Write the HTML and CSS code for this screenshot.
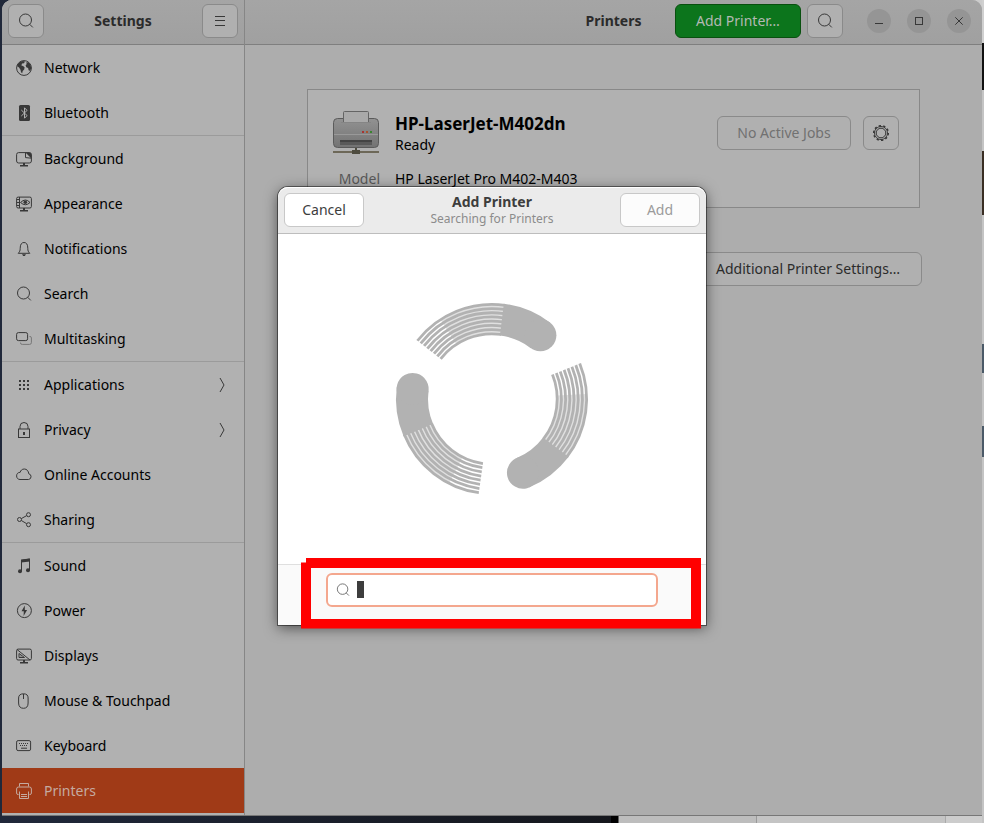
FILE: index.html
```html
<!DOCTYPE html>
<html lang="en">
<head>
<meta charset="utf-8">
<title>Settings</title>
<link rel="stylesheet" href="styles.css">
</head>
<body>
<svg class="defs" aria-hidden="true">
  <symbol id="search" viewBox="0 0 16 16"><circle cx="7.5" cy="7" r="6"/><path d="M11.600 11.200l3.200 3.200"/></symbol>
</svg>
<div class="window">
  <aside class="sidebar">
    <header class="bar">
      <button class="btn square" aria-label="Search settings"><svg class="icon"><use href="#search"/></svg></button>
      <h1 class="title">Settings</h1>
      <button class="btn square" aria-label="Menu"><svg class="icon crisp" viewBox="0 0 16 16"><path d="M3 3.500h10M3 7.500h10M3 12.500h10"/></svg></button>
    </header>
    <nav class="nav">
      <a href="#"><svg class="icon" viewBox="0 0 16 16"><circle cx="8" cy="8" r="7.400"/><path class="fill" d="M1 6C2 3 4 1.200 7 1l2 .6-1 1.600-2 .4-.6 1.800 1.600.7 1.600 1.200-.4 2.200-1.500 1.400-.5 2.400-1.200-1-.5-2.600L3 7.500zM10 2.600l2.400-.4 2 2.300.8 3.500-1 3-1.600-.7-.5-2.300-1.800-.8-.7-2 1.200-1.200z"/></svg>Network</a>
      <a href="#"><svg class="icon" viewBox="0 0 16 16"><rect class="fill" x="3" y="0" width="11" height="16" rx="1.500"/><path class="cut" d="M5.300 5l5.800 5.600-2.600 2.600V2.800l2.600 2.600L5.300 11"/></svg>Bluetooth</a>
      <a class="group" href="#"><svg class="icon" viewBox="0 0 16 16"><rect x=".6" y="1.600" width="14.800" height="10.400" rx="2"/><path class="fill" d="M9.500 1.500H14l1.400 1.500v4.500zM7 12h2v2h3v1.500H4V14h3z"/><path d="M9.500 1.600v5l5.800.6"/></svg>Background</a>
      <a href="#"><svg class="icon" viewBox="0 0 16 16"><rect x=".6" y="1.100" width="14.800" height="10.900" rx="1.500"/><path d="M3.500 1v11M1 3.500h2M1 6.500h2M1 9.500h2M4.500 6.500Q9.500 1.500 14 6.500 9.500 11 4.500 6.500z"/><circle class="fill" cx="9.300" cy="6.300" r="1.800"/><path class="fill" d="M7 12h2v2h3v1.500H4V14h3z"/></svg>Appearance</a>
      <a href="#"><svg class="icon" viewBox="0 0 16 16"><path d="M2.200 12.300h11.600c-1.500-1.500-2-2.500-2-5C11.800 3.500 10.500 1.500 8 1.500S4.200 3.500 4.200 7.300c0 2.500-.5 3.500-2 5z"/><path class="fill" d="M6 13.300h4L8.800 15H7.200z"/></svg>Notifications</a>
      <a href="#"><svg class="icon"><use href="#search"/></svg>Search</a>
      <a href="#"><svg class="icon" viewBox="0 0 16 16"><rect x=".6" y="1.600" width="11" height="8" rx="1.800"/><path class="soft" d="M13.500 5.500h.5q1.400 0 1.400 1.400v4.700q0 1.800-1.800 1.800H6.300q-1.800 0-1.800-1.400v-.4"/></svg>Multitasking</a>
      <a class="group" href="#"><svg class="icon" viewBox="0 0 16 16"><path class="fill" d="M3 3h2v2H3zM7 3h2v2H7zM11 3h2v2h-2zM3 7h2v2H3zM7 7h2v2H7zM11 7h2v2h-2zM3 11h2v2H3zM7 11h2v2H7zM11 11h2v2h-2z"/></svg>Applications<svg class="icon next" viewBox="0 0 16 16"><path d="M6 1l4 7-4 7"/></svg></a>
      <a href="#"><svg class="icon" viewBox="0 0 16 16"><rect x="2.500" y="7" width="11" height="8.500"/><path d="M4 7V4.500a4 4 0 0 1 8 0V7"/><path class="fill" d="M7 10h2v3H7z"/></svg>Privacy<svg class="icon next" viewBox="0 0 16 16"><path d="M6 1l4 7-4 7"/></svg></a>
      <a href="#"><svg class="icon" viewBox="0 0 16 16"><path d="M4 12.500h8.500a2.900 2.900 0 0 0 .3-5.700C12.500 4 10.800 2 8.300 2 6 2 4.600 3.500 4.200 5.300 2 5.300.6 6.800.6 8.900.6 11 2 12.500 4 12.500z"/></svg>Online Accounts</a>
      <a href="#"><svg class="icon" viewBox="0 0 16 16"><circle cx="3.500" cy="7.500" r="2"/><circle cx="12.500" cy="2.700" r="2"/><circle cx="12.500" cy="12.700" r="2"/><path d="M5.300 6.600l5.400-3M5.300 8.500l5.400 3.200"/></svg>Sharing</a>
      <a class="group" href="#"><svg class="icon" viewBox="0 0 16 16"><path d="M5.500 13V2.500L13.500 1v11"/><path class="fill" d="M5 1.500L14 .5v3L5 4.500z"/><circle class="fill" cx="4" cy="13.300" r="2"/><circle class="fill" cx="12" cy="12.300" r="2"/></svg>Sound</a>
      <a href="#"><svg class="icon" viewBox="0 0 16 16"><circle cx="8.400" cy="7.600" r="7"/><path class="fill" d="M8.800 2.500L5.500 8.300h2.300l-.2 4.700 3.500-6H8.800z"/></svg>Power</a>
      <a href="#"><svg class="icon" viewBox="0 0 16 16"><rect x=".6" y="1.100" width="14.800" height="10.900" rx="1.500"/><path d="M1 1.500L14 12M3 5.500v4h5.500zM4.500 8h1"/><path class="fill" d="M7 12h2v2h3v1.500H4V14h3z"/></svg>Displays</a>
      <a href="#"><svg class="icon" viewBox="0 0 16 16"><path d="M7.500.8c3.200 0 4.600 1.500 4.600 4.200v5c0 3.500-1.500 5.300-4.600 5.300S2.600 13.500 2.600 10V5C2.600 2.300 4.300.8 7.500.8zM7.500 1v5"/></svg>Mouse &amp; Touchpad</a>
      <a href="#"><svg class="icon" viewBox="0 0 16 16"><rect x=".6" y="2.600" width="14" height="10" rx="1.500"/><path class="keys" d="M3 5.500h10M4 7.500h8"/><path d="M5 10.200h6"/></svg>Keyboard</a>
      <a class="active" href="#" aria-current="page"><svg class="icon" viewBox="0 0 16 16"><path d="M3.500 3.500v-3h9v3M2.500 11.500H2Q.6 11.500.6 10V6Q.6 4 2.500 4h11q1.900 0 1.900 2v4q0 1.500-1.400 1.500h-.5M3.500 8.500v7h9v-7M5 11.500h6M5 13.500h6"/></svg>Printers</a>
    </nav>
  </aside>
  <main class="main">
    <header class="bar split">
      <h2 class="title">Printers</h2>
      <div class="tools">
        <button class="btn suggested">Add Printer…</button>
        <button class="btn square" aria-label="Search printers"><svg class="icon"><use href="#search"/></svg></button>
        <div class="controls">
          <button aria-label="Minimize"><svg class="icon crisp" viewBox="0 0 16 16"><path d="M4 10.500h8"/></svg></button>
          <button aria-label="Maximize"><svg class="icon crisp" viewBox="0 0 16 16"><path d="M4.500 4.500h7v7h-7z"/></svg></button>
          <button aria-label="Close"><svg class="icon" viewBox="0 0 16 16"><path d="M4.300 4.300l7.400 7.400M11.700 4.300l-7.400 7.400"/></svg></button>
        </div>
      </div>
    </header>
    <section class="page">
      <article class="card">
        <svg class="printer" viewBox="0 0 48 45">
          <defs><linearGradient id="shell" x2="0" y2="1"><stop stop-color="#929292"/><stop offset="1" stop-color="#737373"/></linearGradient></defs>
          <path fill="#6d6858" d="M1 41h46v2H1z"/><path fill="#4f4d40" d="M20 40h8v4h-8zM23 37h2v3h-2z"/>
          <rect x="1.500" y="8.500" width="45" height="29" rx="4" fill="url(#shell)" stroke="#5b5b5b"/>
          <path stroke="#999" d="M2 24.500h44"/>
          <path fill="#a9a9a9" stroke="#646464" d="M11.500 12V2.500q0-1 1-1h23q1 0 1 1V12"/><path fill="#858585" d="M9 12h30v1H9z"/>
          <path fill="#444" d="M8 30h32v2H8z"/><path fill="#5a5a5a" d="M8 32h32v3H8z"/>
          <path fill="#a83232" d="M30 21h2v2h-2z"/><path fill="#a8542c" d="M34 21h2v2h-2z"/><path fill="#39842f" d="M38 21h2v2h-2z"/>
        </svg>
        <div class="identity"><h3>HP-LaserJet-M402dn</h3><p>Ready</p></div>
        <div class="actions">
          <button class="btn" disabled>No Active Jobs</button>
          <button class="btn square" aria-label="Printer options"><svg class="icon" viewBox="0 0 16 16"><circle cx="8" cy="8" r="6.500"/><circle cx="8" cy="8" r="4.800"/><circle class="teeth" cx="8" cy="8" r="7.300" pathLength="60"/></svg></button>
        </div>
        <span class="label">Model</span><span class="model">HP LaserJet Pro M402-M403</span>
      </article>
      <button class="btn more">Additional Printer Settings…</button>
    </section>
  </main>
  <div class="overlay">
    <section class="dialog" role="dialog" aria-labelledby="dialog-title">
      <header class="dialog-bar">
        <button class="btn">Cancel</button>
        <div class="heading"><h2 id="dialog-title">Add Printer</h2><p>Searching for Printers</p></div>
        <button class="btn" disabled>Add</button>
      </header>
      <div class="searching">
        <svg class="spinner" viewBox="0 0 192 192" role="img" aria-label="Searching">
          <defs><g id="arm">
            <g stroke-width="2.800" stroke-dasharray="60 300">
              <circle cx="96" cy="96" r="65.200" pathLength="360" transform="rotate(218 96 96)"/><circle cx="96" cy="96" r="69.400" pathLength="360" transform="rotate(218 96 96)"/><circle cx="96" cy="96" r="73.600" pathLength="360" transform="rotate(218 96 96)"/><circle cx="96" cy="96" r="77.800" pathLength="360" transform="rotate(218 96 96)"/><circle cx="96" cy="96" r="82" pathLength="360" transform="rotate(218 96 96)"/><circle cx="96" cy="96" r="86.200" pathLength="360" transform="rotate(218 96 96)"/><circle cx="96" cy="96" r="90.400" pathLength="360" transform="rotate(218 96 96)"/><circle cx="96" cy="96" r="94.600" pathLength="360" transform="rotate(218 96 96)"/>
            </g>
            <circle class="haze" cx="96" cy="96" r="80" stroke-width="30" pathLength="360" stroke-dasharray="40 320" transform="rotate(237 96 96)"/>
            <circle cx="96" cy="96" r="80" stroke-width="32" pathLength="360" stroke-dasharray="30.400 329.600" transform="rotate(277 96 96)"/>
            <circle class="cap" cx="144.400" cy="32.300" r="16"/>
          </g></defs>
          <use href="#arm"/><use href="#arm" transform="rotate(120 96 96)"/><use href="#arm" transform="rotate(240 96 96)"/>
        </svg>
      </div>
      <footer class="dialog-foot">
        <label class="field"><svg class="icon"><use href="#search"/></svg><span class="caret"></span><input type="text" aria-label="Search for a printer"></label>
      </footer>
      <div class="highlight"></div>
    </section>
  </div>
</div>
</body>
</html>
```

FILE: styles.css
```css
* { box-sizing: border-box; }
body {
  margin: 0;
  min-height: 100vh;
  display: flex;
  padding: 0 2px 8px;
  font: 14px/18px "Noto Sans", sans-serif;
  color: #000;
  background:
    linear-gradient(#d0d0d0 43px, #111 43px 90px, #c4c4c4 90px 151px, #3a2e24 151px 215px, #c4c4c4 215px 344px, #4b5a68 344px 373px, #c4c4c4 373px 426px, #4b5a68 426px 457px, #c4c4c4 457px) right / 2px 100% no-repeat,
    linear-gradient(90deg, #20283a, #15171d 611px, #000 611px 618px, #bdbdbd 619px 756px, #999 756px 757px, #c4c4c4 757px 945px, #aaa 945px 946px, #ccc 946px);
}
h1, h2, h3, p { margin: 0; font-size: inherit; }
a { color: inherit; text-decoration: none; }
.defs { position: absolute; width: 0; height: 0; }
.window {
  position: relative;
  flex: 1;
  display: flex;
  border-radius: 10px 10px 0 0;
  overflow: hidden;
  background: #adadad;
  box-shadow: 0 1px 0 #777;
}
.icon { width: 16px; height: 16px; flex: none; fill: none; stroke: #383838; stroke-width: 1; overflow: visible; }
.icon .fill { fill: #383838; stroke: none; }
.icon .cut { stroke: #b1b1b1; stroke-width: 1; }
.icon .soft { stroke: #777; }
.icon .keys { stroke-dasharray: 1 1; }
.icon .teeth { stroke-dasharray: 3 3; stroke-width: 1.5; }
.crisp { shape-rendering: crispEdges; }

.bar {
  display: flex;
  align-items: center;
  justify-content: space-between;
  height: 45px;
  padding: 0 6px 3px;
  background: linear-gradient(#a5a5a5, #a0a0a0);
  border-bottom: 1px solid #7f7f7f;
}
.title { font-weight: 700; color: #2b2b2b; }
.btn {
  height: 34px;
  padding: 0 16px;
  border: 1px solid #8a8a8a;
  border-radius: 6px;
  background: #b0b0b0;
  font: inherit;
  color: #2b2b2b;
  white-space: nowrap;
}
.btn:disabled { color: #717171; }
.square { display: flex; align-items: center; justify-content: center; width: 36px; padding: 0; }
.suggested { width: 126px; padding: 0; background: #0c751c; border-color: #09500f; color: #b3b9b3; }

.sidebar { width: 243px; flex: none; background: #b1b1b1; border-right: 1px solid #868686; }
.nav a { display: flex; align-items: center; gap: 12px; height: 45px; padding: 0 14px; }
.nav .group { height: 46px; border-top: 1px solid #9b9b9b; }
.nav .next { margin-left: auto; }
.nav .active { background: #a03a17; color: #c5aaa0; }
.nav .active .icon { stroke: #c5aaa0; }

.main { flex: 1; min-width: 0; }
.split { display: grid; grid-template-columns: 1fr auto 1fr; padding-right: 11px; padding-left: 11px; }
.split .title { grid-column: 2; }
.tools { display: flex; justify-content: flex-end; gap: 6px; }
.controls { display: flex; align-items: center; gap: 16px; margin-left: 18px; }
.controls button { display: flex; align-items: center; justify-content: center; width: 24px; height: 24px; padding: 0; border: 0; border-radius: 50%; background: #959595; }
.page { padding: 44px 60px; display: flex; flex-direction: column; align-items: flex-end; gap: 44px; }
.card {
  align-self: stretch;
  display: grid;
  grid-template-columns: 48px 1fr auto;
  column-gap: 15px;
  row-gap: 15px;
  margin: 0 2px;
  padding: 20px 20px 19px 24px;
  border: 1px solid #888;
  background: #b1b1b1;
}
.printer { width: 48px; height: 45px; fill: none; }
.identity h3 { font-size: 17px; line-height: 22px; margin-top: 3px; }
.identity p { line-height: 20px; }
.actions { display: flex; gap: 12px; align-items: flex-start; padding-top: 6px; }
.actions .btn:first-child { width: 134px; padding: 0; }
.label { text-align: right; color: #595959; }
.model { grid-column: 2 / 4; }
.more { width: 228px; }

.overlay { position: absolute; inset: 0; display: flex; align-items: center; justify-content: center; }
.dialog {
  position: relative;
  width: 428px;
  margin-top: -4px;
  border-radius: 10px 10px 0 0;
  background: #fff;
  box-shadow: 0 0 0 1px rgba(0, 0, 0, .45), 0 3px 14px rgba(0, 0, 0, .55);
}
.dialog-bar {
  display: flex;
  align-items: center;
  justify-content: space-between;
  height: 47px;
  padding: 0 6px;
  border-bottom: 1px solid #bdbdbd;
  border-radius: 10px 10px 0 0;
  background: #ebebeb;
  box-shadow: inset 0 1px #fff;
}
.dialog .btn { width: 80px; padding: 0; background: #fff; border-color: #c8c8c8; color: #3d3d3d; }
.dialog .btn:disabled { background: #fcfcfc; color: #9b9b9b; }
.heading { text-align: center; line-height: 18px; color: #3d3d3d; }
.heading p { font-size: 12px; line-height: 16px; color: #8c8c8c; }
.searching { display: flex; align-items: center; justify-content: center; height: 330px; }
.spinner { width: 192px; height: 192px; fill: none; stroke: #b2b2b2; overflow: visible; }
.spinner .cap { fill: #b2b2b2; stroke: none; }
.spinner .haze { opacity: .4; }
.dialog-foot { display: flex; justify-content: center; padding: 8px 48px 18px; border-top: 1px solid #dfdfdf; background: #fafafa; }
.field { display: flex; align-items: center; flex: 1; height: 34px; padding: 0 8px; border: 2px solid #f4a78e; border-radius: 6px; background: #fff; }
.field .icon { width: 14px; height: 14px; stroke: #666; }
.caret { width: 7px; height: 17px; margin-left: 7px; background: #3d3d3d; }
.field input { flex: 1; min-width: 0; border: 0; padding: 0; outline: 0; background: none; font: inherit; }
.highlight {
  position: absolute;
  left: 23px;
  right: 5px;
  bottom: -4px;
  height: 71px;
  border: 10px solid #f00;
  clip-path: polygon(5px 0, 100% 0, 100% 100%, 0 100%, 0 5px, 5px 5px);
  pointer-events: none;
}
```
